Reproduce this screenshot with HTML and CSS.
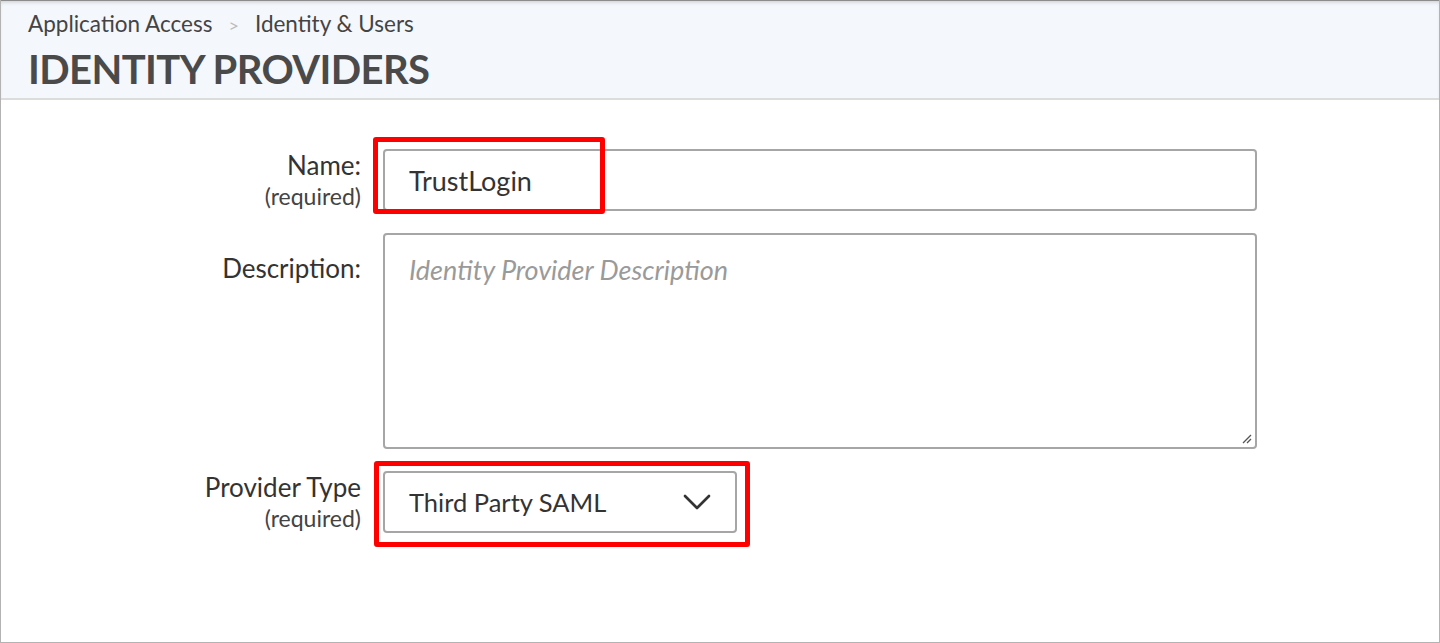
FILE: index.html
```html
<!DOCTYPE html>
<html>
<head>
<meta charset="utf-8">
<link rel="stylesheet" href="styles.css">
</head>
<body>
<div class="frame">
  <header class="page-header">
    <nav class="crumbs">
      <span>Application Access</span>
      <span class="sep">&gt;</span>
      <span>Identity &amp; Users</span>
    </nav>
    <h1 class="title">IDENTITY PROVIDERS</h1>
  </header>
  <main class="form">
    <div class="label">
      <span class="main">Name:</span>
      <span class="req">(required)</span>
    </div>
    <div class="field">
      <div class="input">TrustLogin</div>
      <div class="mark mark-name"></div>
    </div>

    <div class="label label-desc">
      <span class="main">Description:</span>
    </div>
    <div class="field">
      <div class="textarea">
        <span class="placeholder">Identity Provider Description</span>
        <svg class="grip" width="12" height="12" viewBox="0 0 12 12"><path d="M11 3 L3 11 M11 7 L7 11" stroke="#555" stroke-width="1.3" fill="none"/></svg>
      </div>
    </div>

    <div class="label">
      <span class="main">Provider Type</span>
      <span class="req">(required)</span>
    </div>
    <div class="field">
      <div class="select">
        <span>Third Party SAML</span>
        <svg class="chev" width="28" height="16" viewBox="0 0 28 16"><path d="M2 2 L14 14 L26 2" stroke="#333" stroke-width="2.7" fill="none" stroke-linecap="round" stroke-linejoin="round"/></svg>
      </div>
      <div class="mark mark-type"></div>
    </div>
  </main>
</div>
</body>
</html>
```

FILE: styles.css
```css
html, body {
  margin: 0;
  padding: 0;
  background: #fff;
}
body {
  font-family: Lato, "Open Sans", sans-serif;
  color: #333;
}
.frame {
  width: 1440px;
  height: 643px;
  box-sizing: border-box;
  border-left: 1px solid #b3b3b3;
  border-right: 1px solid #b3b3b3;
  border-bottom: 1px solid #b3b3b3;
  overflow: hidden;
}
.page-header {
  height: 100px;
  box-sizing: border-box;
  background: #f4f7fc;
  border-top: 1px solid #8c8c8c;
  box-shadow: inset 0 3px 4px -2px rgba(0,0,0,0.18);
  border-bottom: 2px solid #dcdcdc;
  padding: 9px 0 0 27px;
}
.crumbs {
  font-size: 22.5px;
  line-height: 28px;
  color: #444;
  display: flex;
  align-items: baseline;
  gap: 16px;
}
.crumbs .sep {
  color: #bbb;
  font-size: 18px;
}
.title {
  margin: 5px 0 0 0;
  font-size: 40px;
  line-height: 50px;
  font-weight: 700;
  color: #4a4a4a;
  letter-spacing: -0.6px;
}
.form {
  display: grid;
  grid-template-columns: 360px 874px;
  column-gap: 22px;
  row-gap: 22px;
  padding-top: 49px;
}
.label {
  display: flex;
  flex-direction: column;
  align-items: flex-end;
}
.label .main {
  font-size: 26px;
  line-height: 32px;
  color: #333;
}
.label .req {
  font-size: 23px;
  line-height: 30px;
  color: #444;
}
.label-desc {
  padding-top: 19px;
}
.field {
  position: relative;
}
.input {
  height: 62px;
  box-sizing: border-box;
  border: 2px solid #a6a6a6;
  border-radius: 4px;
  padding: 0 0 0 24px;
  display: flex;
  align-items: center;
  font-size: 27px;
  color: #333;
}
.textarea {
  position: relative;
  height: 216px;
  box-sizing: border-box;
  border: 2px solid #a6a6a6;
  border-radius: 4px;
  padding: 18px 24px;
}
.placeholder {
  font-size: 27px;
  line-height: 34px;
  font-style: italic;
  color: #9a9a9a;
}
.grip {
  position: absolute;
  right: 3px;
  bottom: 3px;
}
.select {
  width: 354px;
  height: 62px;
  box-sizing: border-box;
  border: 2px solid #a6a6a6;
  border-radius: 4px;
  padding: 0 24px 0 24px;
  display: flex;
  align-items: center;
  justify-content: space-between;
  font-size: 25.5px;
  color: #333;
}
.mark {
  position: absolute;
  border: 5px solid #f00;
  border-radius: 3px;
  box-sizing: border-box;
  pointer-events: none;
}
.mark-name {
  left: -10px;
  top: -12px;
  width: 232px;
  height: 77px;
}
.mark-type {
  left: -9px;
  top: -10px;
  width: 376px;
  height: 86px;
}
```
